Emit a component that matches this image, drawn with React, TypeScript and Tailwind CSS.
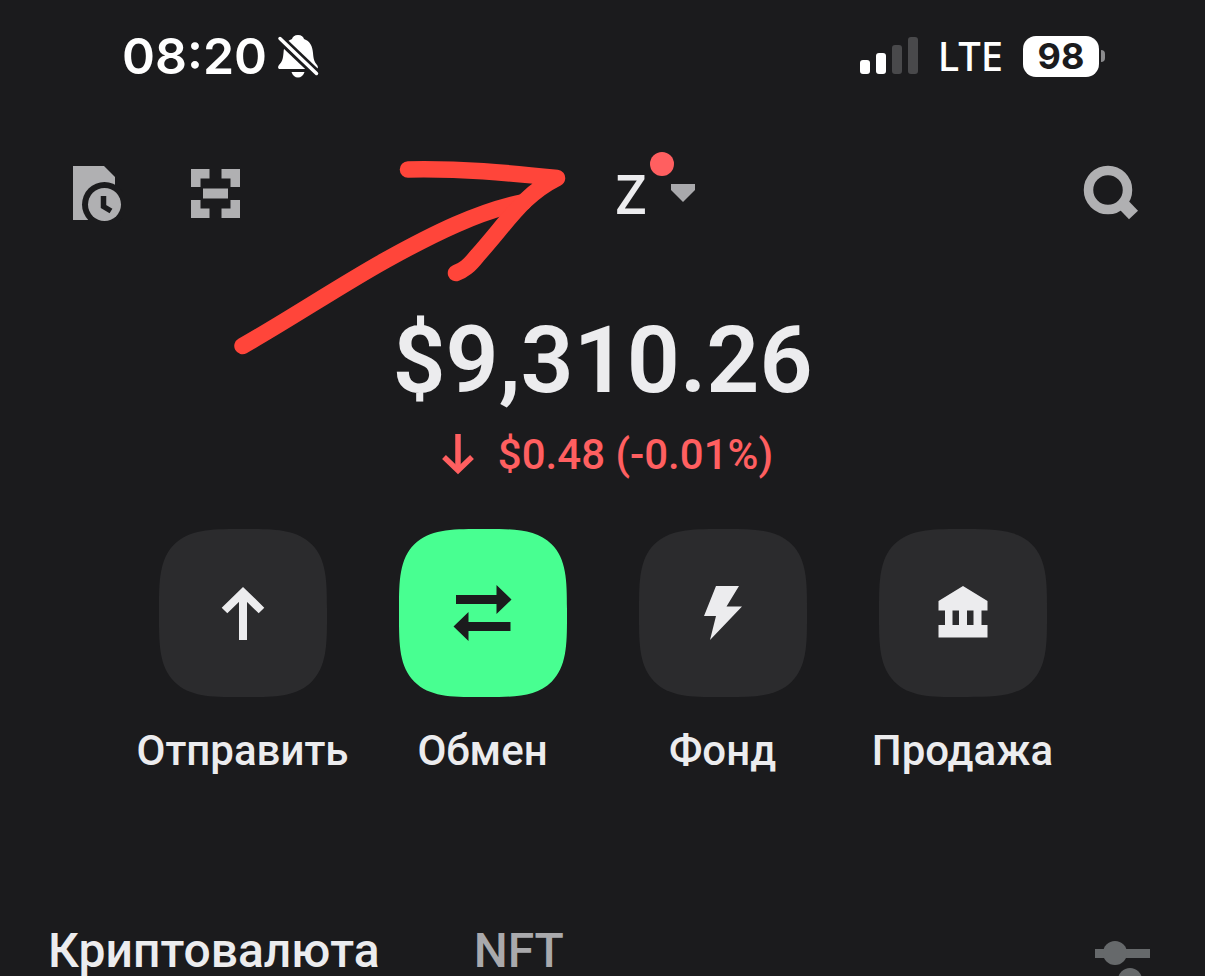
import React from 'react';

type Action = {
  label: string;
  primary?: boolean;
  icon: React.ReactNode;
};

const SendIcon = () => (
  <svg viewBox="0 0 60 60" className="w-[60px] h-[60px]" fill="none" stroke="#ececee" strokeWidth="8" aria-hidden="true">
    <path d="M30 57V9" />
    <path d="M11.500 27.500L30 9.500l18.500 18" />
  </svg>
);

const SwapIcon = () => (
  <svg viewBox="0 0 60 60" className="w-[60px] h-[60px]" fill="#1b1b1d" aria-hidden="true">
    <path d="M3 12h40.500V2L58.500 16.500 43.500 31v-10H3z" />
    <path d="M57.500 39H15.500v-10L.5 43.500l15 14.500V48h42z" />
  </svg>
);

const BoltIcon = () => (
  <svg viewBox="0 0 60 60" className="w-[60px] h-[60px]" fill="#ececee" aria-hidden="true">
    <path d="M23 3h23L33.500 23.500H49L17 57l6-24H11z" />
  </svg>
);

const BankIcon = () => (
  <svg viewBox="0 0 60 60" className="w-[60px] h-[60px]" fill="#ececee" aria-hidden="true">
    <path d="M30 3L54.500 18v9.500h-6V42h6v12.500h-49V42h6.500V27.500H5.500V18z" />
    <path d="M19.500 27.500h6.500V42h-6.500zM34 27.500h6.500V42H34z" fill="#2b2b2d" />
  </svg>
);

const actions: Action[] = [
  { label: 'Отправить', icon: <SendIcon /> },
  { label: 'Обмен', primary: true, icon: <SwapIcon /> },
  { label: 'Фонд', icon: <BoltIcon /> },
  { label: 'Продажа', icon: <BankIcon /> },
];

const StatusBar = () => (
  <div className="flex items-center justify-between h-14 pl-[122px] pr-[100px] text-white font-['Inter',sans-serif]">
    <div className="flex items-center gap-2.5">
      <span className="text-[50px] leading-[56px] font-semibold">08:20</span>
      <svg viewBox="0 0 42 44" className="w-[42px] h-[44px]" aria-hidden="true">
        <path d="M21 1c3.500 0 5.500 2 6 4 6 2 8.500 7 9 14 .4 6 1.500 9 4 12 1.500 2 1 4-1 4H3c-2 0-2.500-2-1-4 3-3 4-6 4.500-12C7 12 9 7 15 5c.5-2 2.500-4 6-4z" fill="#fff" />
        <path d="M14.500 38h13c-1 3.500-3.500 5.500-6.500 5.500s-5.500-2-6.500-5.500z" fill="#fff" />
        <path d="M-1 1l42 40" stroke="#1b1b1d" strokeWidth="9" />
        <path d="M3 4.500l36.500 35" stroke="#fff" strokeWidth="3.500" strokeLinecap="round" />
      </svg>
    </div>
    <div className="flex items-center">
      <svg viewBox="0 0 58 38" className="w-[58px] h-[38px]" aria-hidden="true">
        <rect x="0" y="23" width="10" height="14" rx="3" fill="#fff" />
        <rect x="16" y="16" width="10" height="21" rx="3" fill="#fff" />
        <rect x="32" y="8" width="10" height="29" rx="3" fill="#49494b" />
        <rect x="48" y="0" width="10" height="37" rx="3" fill="#49494b" />
      </svg>
      <span className="ml-5 text-[40px] leading-[56px] font-medium font-['Noto_Sans',sans-serif]">LTE</span>
      <span className="ml-5 flex items-center justify-center w-[76px] h-[41px] rounded-[13px] bg-white text-[#1b1b1d] text-[36px] leading-[40px] font-bold">98</span>
      <span className="ml-0.5 w-1 h-3 rounded-r-full bg-[#8b8b8d]" />
    </div>
  </div>
);

const Header = () => (
  <header className="grid grid-cols-[1fr_auto_1fr] items-center mt-[81px] pl-[72px] pr-[66px]">
    <div className="flex items-center gap-[68px]">
      <button type="button" aria-label="История">
        <svg viewBox="0 0 51 56" className="block w-[51px] h-[56px]" aria-hidden="true">
          <path d="M1 1h31l11 11v43H1z" fill="#b0b0b2" />
          <circle cx="32.500" cy="39.500" r="22.500" fill="#1b1b1d" />
          <circle cx="32.500" cy="39.500" r="16.500" fill="#b0b0b2" />
          <path d="M31.500 31v10.500l7.500 4.500" fill="none" stroke="#1b1b1d" strokeWidth="5.500" />
        </svg>
      </button>
      <button type="button" aria-label="Сканировать">
        <svg viewBox="0 0 49 49" className="block w-[49px] h-[49px]" fill="#b0b0b2" aria-hidden="true">
          <path d="M0 0h18.500v9.500h-9V18H0zM30.500 0H49v18h-9.500V9.500h-9zM0 31h9.500v8.500h9V49H0zM39.500 31H49v18H30.500v-9.500h9zM12 19.500h25v10H12z" />
        </svg>
      </button>
    </div>
    <button type="button" aria-label="Кошелёк Z" className="relative flex items-center gap-6 pl-[99px]">
      <span className="text-[54px] leading-[56px] font-semibold text-[#ececee] font-['Open_Sans',sans-serif]">Z</span>
      <svg viewBox="0 0 24 18" className="w-6 h-[18px]" fill="#a9a9ac" aria-hidden="true">
        <path d="M0 0h24v6L12 18 0 6z" />
      </svg>
      <span className="absolute right-[21px] -top-[13px] size-6 rounded-full bg-[#ff5f60]" />
    </button>
    <button type="button" aria-label="Поиск" className="justify-self-end">
      <svg viewBox="0 0 56 56" className="block w-[56px] h-[56px]" fill="none" stroke="#b0b0b2" aria-hidden="true">
        <circle cx="25" cy="25" r="19.500" strokeWidth="9.500" />
        <path d="M38 37l12.500 13" strokeWidth="12.500" />
      </svg>
    </button>
  </header>
);

const Balance = () => (
  <section className="flex flex-col items-center mt-[92px]">
    <h1 className="text-[93px] leading-[96px] font-semibold text-[#ececee]">$9,310.26</h1>
    <p className="flex items-center gap-6 mt-[22px] pl-2.5 text-[42px] leading-[48px] font-medium text-[#ff5f60]">
      <svg viewBox="0 0 32 42" className="w-8 h-[42px]" fill="none" stroke="currentColor" strokeWidth="5.500" aria-hidden="true">
        <path d="M16 0v37" />
        <path d="M2 23l14 13.500L30 23" />
      </svg>
      $0.48 (-0.01%)
    </p>
  </section>
);

const Actions = () => (
  <nav className="grid grid-cols-4 w-full max-w-[960px] mx-auto mt-[50px]">
    {actions.map((action) => (
      <button key={action.label} type="button" className="flex flex-col items-center gap-[30px]">
        <span
          className={`flex items-center justify-center size-[168px] rounded-[52px] [corner-shape:superellipse(1.7)] supports-[corner-shape:squircle]:rounded-[80px] ${action.primary ? 'bg-[#48ff91]' : 'bg-[#2b2b2d]'}`}
        >
          {action.icon}
        </span>
        <span className="text-[42px] leading-[48px] font-medium text-[#ececee]">{action.label}</span>
      </button>
    ))}
  </nav>
);

const AssetTabs = () => (
  <div className="flex items-start justify-between mt-[152px] pl-12 pr-[55px]">
    <div role="tablist" className="flex gap-[94px] text-[48px] leading-[48px] font-medium">
      <button type="button" role="tab" aria-selected="true" className="text-[#ececee]">Криптовалюта</button>
      <button type="button" role="tab" aria-selected="false" className="text-[#a9a9ac]">NFT</button>
    </div>
    <button type="button" aria-label="Фильтр" className="mt-3.5">
      <svg viewBox="0 0 55 52" className="block w-[55px] h-[52px]" fill="#66696b" aria-hidden="true">
        <path d="M0 8h55v9H0zM0 35h55v9H0z" />
        <circle cx="20" cy="12" r="12" />
        <circle cx="35" cy="39" r="12" />
      </svg>
    </button>
  </div>
);

// Hand-drawn marker pointing at the wallet switcher
const MarkerArrow = () => (
  <svg
    viewBox="0 0 340 200"
    className="absolute left-[230px] top-[158px] w-[340px] h-[200px] pointer-events-none"
    fill="none"
    stroke="#ff453a"
    strokeWidth="16.500"
    strokeLinecap="round"
    strokeLinejoin="round"
    aria-hidden="true"
  >
    <path d="M12.500 188C60 161 111 127 156 102C203 76 249 53 294 44" />
    <path d="M178 11.500C231 10.500 276 14.500 327 20C293 37 279 62 247 98C239 108 234 112 226 115" />
  </svg>
);

export default function App() {
  return (
    <main className="relative h-screen overflow-hidden pt-7 bg-[#1b1b1d] font-['Roboto',sans-serif]">
      <StatusBar />
      <Header />
      <Balance />
      <Actions />
      <AssetTabs />
      <MarkerArrow />
    </main>
  );
}
